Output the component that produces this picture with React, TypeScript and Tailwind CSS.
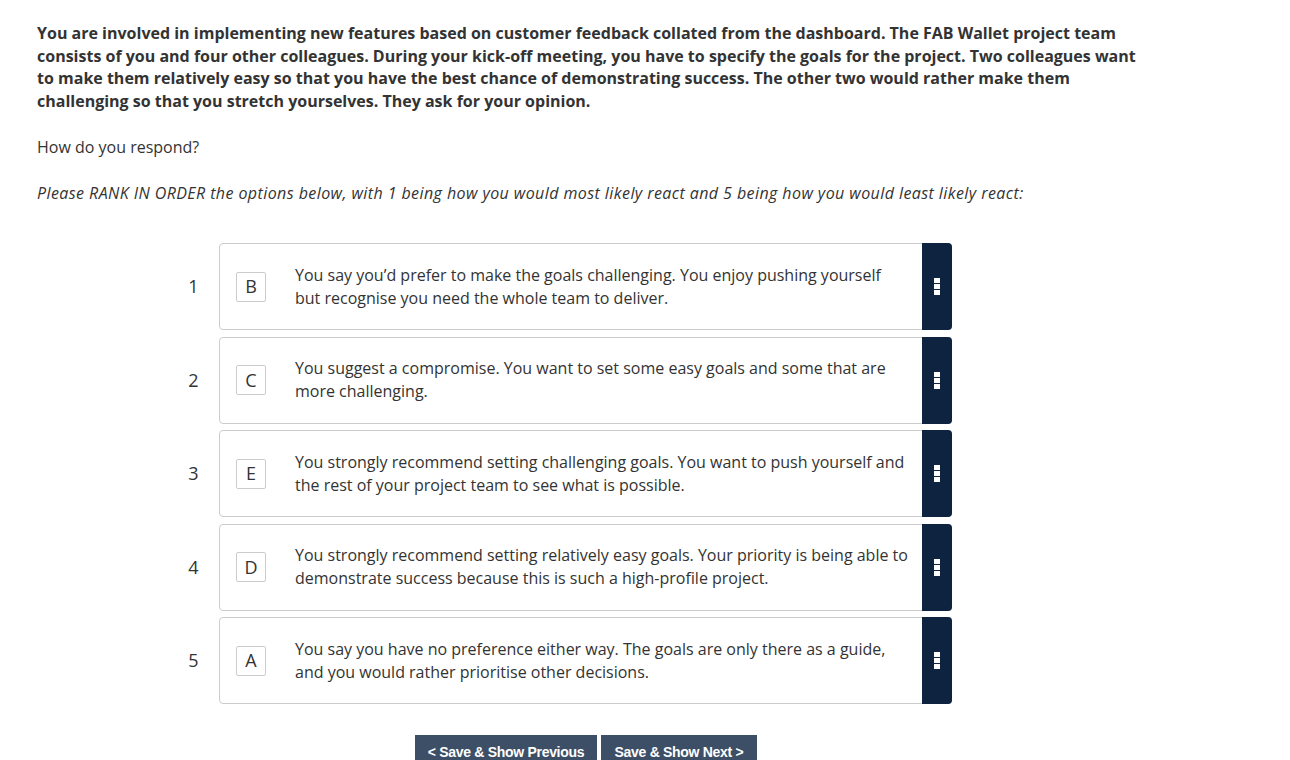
import React from "react";

const items = [
  { n: 1, l: "B", t: "You say you\u2019d prefer to make the goals challenging. You enjoy pushing yourself but recognise you need the whole team to deliver." },
  { n: 2, l: "C", t: "You suggest a compromise. You want to set some easy goals and some that are more challenging." },
  { n: 3, l: "E", t: "You strongly recommend setting challenging goals. You want to push yourself and the rest of your project team to see what is possible." },
  { n: 4, l: "D", t: "You strongly recommend setting relatively easy goals. Your priority is being able to demonstrate success because this is such a high-profile project." },
  { n: 5, l: "A", t: "You say you have no preference either way. The goals are only there as a guide, and you would rather prioritise other decisions." },
];

export default function App() {
  return (
    <div className="min-h-[760px] bg-white text-[#333333] pl-[37px] pt-[22px] overflow-hidden" style={{ fontFamily: '"Open Sans", sans-serif' }}>
      <p className="font-bold text-[16px] leading-[22.6px] w-[1110px] text-[#333333]">
        You are involved in implementing new features based on customer feedback collated from the dashboard. The FAB Wallet project team consists of you and four other colleagues. During your kick-off meeting, you have to specify the goals for the project. Two colleagues want to make them relatively easy so that you have the best chance of demonstrating success. The other two would rather make them challenging so that you stretch yourselves. They ask for your opinion.
      </p>
      <p className="mt-[24px] text-[16px] leading-[22px]">How do you respond?</p>
      <p className="mt-[24px] text-[16px] leading-[22px] italic tracking-[0.42px]">
        Please RANK IN ORDER the options below, with 1 being how you would most likely react and 5 being how you would least likely react:
      </p>
      <div className="mt-[39px] ml-[133px] flex flex-col gap-[6.5px]">
        {items.map((it) => (
          <div key={it.n} className="flex items-center">
            <div className="w-[49px] text-center text-[18px] pr-[2px]">{it.n}</div>
            <div className="flex w-[733px] h-[87px] border border-[#cccccc] rounded-[4px] bg-white">
              <div className="flex flex-1 items-center pl-[16px]">
                <div className="w-[30px] h-[30px] shrink-0 border border-[#cccccc] rounded-[2px] flex items-center justify-center text-[18px]">
                  {it.l}
                </div>
                <div className="ml-[29px] w-[613px] text-[16px] leading-[23px]">{it.t}</div>
              </div>
              <div className="w-[30px] shrink-0 bg-[#0d2340] -my-px -mr-px rounded-r-[4px] flex flex-col items-center justify-center gap-[1px]">
                <div className="w-[6px] h-[5px] bg-white" />
                <div className="w-[6px] h-[5px] bg-white" />
                <div className="w-[6px] h-[5px] bg-white" />
              </div>
            </div>
          </div>
        ))}
      </div>
      <div className="mt-[31px] ml-[378px] flex gap-[4px]" style={{ fontFamily: '"Liberation Sans", Arial, sans-serif' }}>
        <button className="h-[36px] w-[182px] bg-[#3d4f66] text-white font-bold text-[14px] tracking-[-0.3px] pb-[2px]">&lt; Save &amp; Show Previous</button>
        <button className="h-[36px] w-[156px] bg-[#3d4f66] text-white font-bold text-[14px] tracking-[-0.3px] pb-[2px]">Save &amp; Show Next &gt;</button>
      </div>
    </div>
  );
}
